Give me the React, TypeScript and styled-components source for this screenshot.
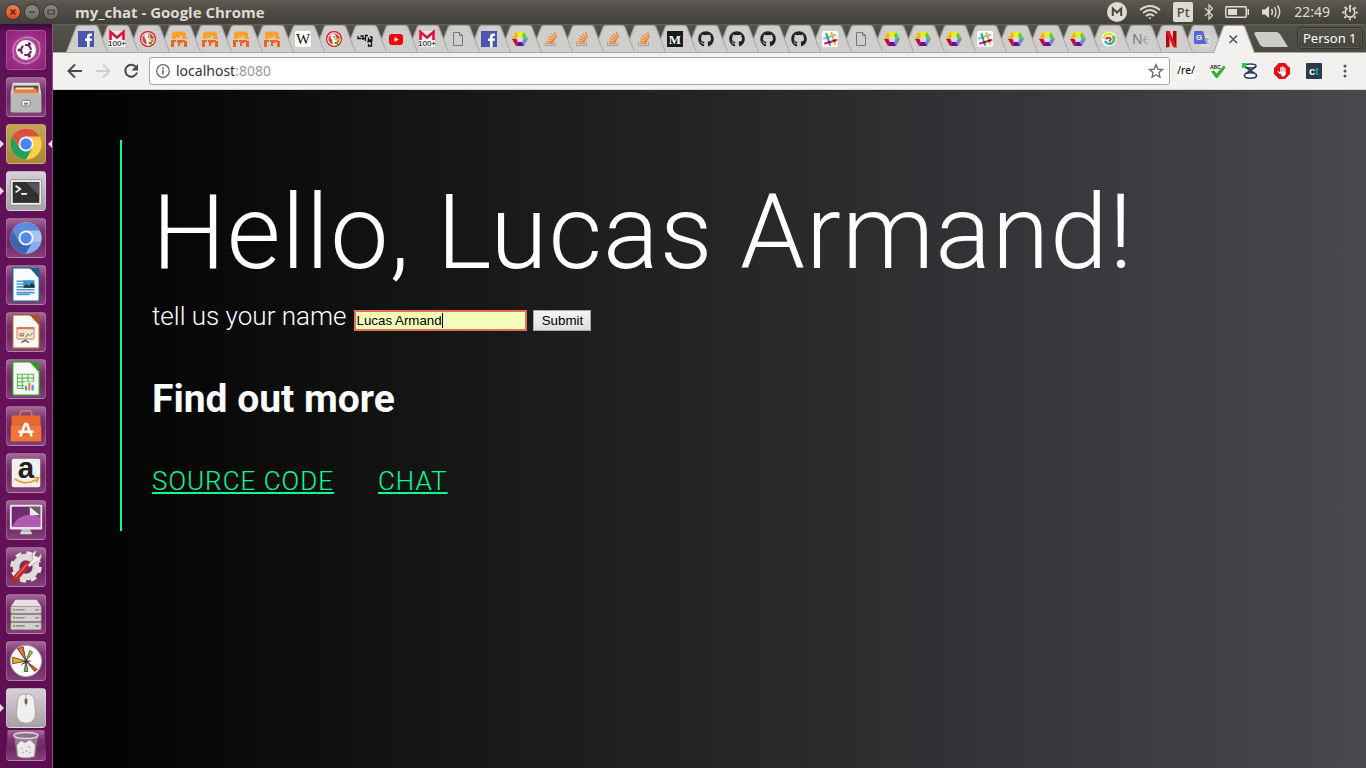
import React from "react";
import styled, { createGlobalStyle } from "styled-components";
import { FaGithub } from "react-icons/fa";

const GlobalStyle = createGlobalStyle`
  * { box-sizing: border-box; }
  html, body, #root { height: 100%; }
  body { margin: 0; overflow: hidden; font-family: "Noto Sans", "Open Sans", sans-serif; }
  svg { display: block; flex: none; overflow: visible; }
`;

/* ---------- desktop frame ---------- */

const Desktop = styled.div`
  display: flex;
  flex-direction: column;
  min-height: 100vh;
  background: #000;
`;

const TitleBar = styled.header`
  display: flex;
  align-items: center;
  justify-content: space-between;
  height: 24px;
  padding: 0 8px 0 5px;
  background: linear-gradient(#5f5d50 0, #59574e 2px, #403f3a 100%);
  color: #dfdbd2;
`;

const TitleGroup = styled.div`
  display: flex;
  align-items: center;
  gap: 3px;
`;

const WindowButton = styled.button<{ $close?: boolean }>`
  display: grid;
  place-items: center;
  width: 16px;
  height: 16px;
  padding: 0;
  border: 1px solid #3a3934;
  border-radius: 50%;
  background: ${(p) => (p.$close ? "linear-gradient(#f37e56, #df4b1c)" : "linear-gradient(#8a887f, #6d6b63)")};
`;

const WindowTitle = styled.h1`
  margin: 0 0 0 13px;
  font-family: "Open Sans", sans-serif;
  font-size: 15px;
  line-height: 20px;
  font-weight: 700;
  white-space: nowrap;
`;

const Indicators = styled.div`
  display: flex;
  align-items: center;
  gap: 12px;
`;

const LayoutBadge = styled.span`
  width: 20px;
  height: 20px;
  border-radius: 2px;
  background: #dfdbd2;
  color: #47463f;
  font-size: 13px;
  font-weight: 500;
  line-height: 20px;
  text-align: center;
`;

const Clock = styled.time`
  font-size: 14px;
  line-height: 20px;
`;

const Workspace = styled.div`
  display: flex;
  flex: 1;
  min-height: 0;
`;

/* ---------- launcher ---------- */

const Launcher = styled.nav`
  display: flex;
  flex-direction: column;
  align-items: center;
  gap: 7px;
  flex: none;
  width: 53px;
  padding-top: 6px;
  border-right: 1px solid #8b4a80;
  background: linear-gradient(#3b0b36 0, #5f1157 8px, #651158 60%, #5c0d50 100%);
`;

const Tile = styled.button<{ $bg: string; $folded?: boolean }>`
  display: grid;
  place-items: center;
  flex: none;
  width: 40px;
  height: ${(p) => (p.$folded ? 31 : 40)}px;
  margin-top: ${(p) => (p.$folded ? -5 : 0)}px;
  padding: 0;
  border: 1px solid rgba(255, 255, 255, 0.2);
  border-radius: 4px;
  background: ${(p) => p.$bg};
  clip-path: ${(p) => (p.$folded ? "polygon(4% 0, 96% 0, 100% 100%, 0 100%)" : "none")};
`;

const TileSlot = styled.div<{ $running?: boolean; $active?: boolean }>`
  position: relative;
  flex: none;
  &::before,
  &::after {
    position: absolute;
    top: 16px;
    border: 4px solid transparent;
    content: "";
  }
  &::before {
    display: ${(p) => (p.$running ? "block" : "none")};
    left: -6px;
    border-left-color: #e4dbe2;
    border-right-width: 0;
  }
  &::after {
    display: ${(p) => (p.$active ? "block" : "none")};
    right: -6px;
    border-right-color: #e4dbe2;
    border-left-width: 0;
  }
`;

/* ---------- browser ---------- */

const Browser = styled.section`
  display: flex;
  flex-direction: column;
  flex: 1;
  min-width: 0;
`;

const TabStrip = styled.div`
  display: flex;
  align-items: flex-end;
  height: 29px;
  padding-left: 13px;
  background: linear-gradient(#68675a 0, #525146 2px, #4c4b42 100%);
  border-bottom: 1px solid #a9a7a5;
`;

const Tab = styled.button<{ $active?: boolean; $order: number }>`
  position: relative;
  z-index: ${(p) => (p.$active ? 50 : p.$order)};
  display: grid;
  place-items: center;
  flex: none;
  width: 42px;
  height: ${(p) => (p.$active ? 28 : 27)}px;
  margin-right: -11px;
  margin-bottom: ${(p) => (p.$active ? -1 : 0)}px;
  padding: 0 2px 0 0;
  border: 0;
  background: none;
  &::before,
  &::after {
    position: absolute;
    inset: 0;
    z-index: -1;
    background: #aaa8a6;
    clip-path: polygon(0 100%, 10px 1px, 12px 0, 30px 0, 32px 1px, 100% 100%);
    content: "";
  }
  &::after {
    background: ${(p) => (p.$active ? "#f2f1f0" : "#d0cecd")};
    clip-path: polygon(1px 100%, 11px 2px, 13px 1px, 29px 1px, 31px 2px, 41px 100%);
  }
`;

const NewTab = styled.button`
  flex: none;
  width: 34px;
  height: 15px;
  margin: 0 9px 5px 10px;
  padding: 0;
  border: 0;
  background: #cdcbc9;
  clip-path: polygon(0 1px, 2px 0, 23px 0, 26px 2px, 100% 100%, 9px 100%, 6px 13px);
`;

const Profile = styled.button`
  flex: none;
  height: 22px;
  margin: 0 7px 3px auto;
  padding: 0 5px;
  border: 1px solid #35342e;
  border-radius: 4px;
  background: linear-gradient(#53524a, #45443d);
  box-shadow: inset 0 0 0 1px #5a594f;
  color: #fff;
  font: 13px/18px "Noto Sans", sans-serif;
  white-space: nowrap;
`;

const Toolbar = styled.div`
  display: flex;
  align-items: center;
  height: 37px;
  padding: 0 14px 0 13px;
  border-bottom: 1px solid #d6d4d2;
  background: #f2f1f0;
`;

const IconButton = styled.button`
  display: grid;
  place-items: center;
  flex: none;
  width: 18px;
  height: 18px;
  margin-right: 10px;
  padding: 0;
  border: 0;
  background: none;
`;

const AddressBar = styled.form`
  display: flex;
  align-items: center;
  flex: 1;
  min-width: 0;
  height: 28px;
  margin: 0 8px 0 -1px;
  padding: 0 5px;
  border: 1px solid #aaa8a6;
  border-radius: 3px;
  background: #fff;
`;

const UrlInput = styled.input`
  field-sizing: content;
  margin-left: 5px;
  padding: 0;
  border: 0;
  outline: 0;
  background: none;
  color: #333;
  font: 14px/20px "Noto Sans", sans-serif;
`;

const Port = styled.span`
  flex: 1;
  color: #999;
  font-size: 14px;
  line-height: 20px;
`;

const PlainButton = styled.button`
  flex: none;
  padding: 0;
  border: 0;
  background: none;
`;

const Extensions = styled.div`
  display: flex;
  align-items: center;
  gap: 16px;
`;

/* ---------- page ---------- */

const Page = styled.main`
  flex: 1;
  padding: 50px 67px;
  background: linear-gradient(to right, #000, #48494d);
  color: #fff;
  font: 300 26px/30px Roboto, sans-serif;
`;

const Panel = styled.div`
  padding: 32px 30px 35px;
  border-left: 2px solid #00ff95;
`;

const Greeting = styled.h2`
  margin: 0;
  font-size: 104px;
  font-weight: 300;
  line-height: 122px;
  letter-spacing: 1px;
  white-space: nowrap;
`;

const NameForm = styled.form`
  display: flex;
  align-items: center;
  margin-top: 7px;
  height: 30px;
`;

const Label = styled.label`
  margin: -1px 9px 0 0;
  white-space: nowrap;
`;

const NameField = styled.span`
  position: relative;
  display: flex;
  margin: 8px 7px 0 0;
`;

const Caret = styled.span`
  position: absolute;
  left: 87px;
  top: 2px;
  width: 1px;
  height: 15px;
  background: #000;
`;

const NameInput = styled.input`
  width: 171px;
  height: 19px;
  padding: 0;
  border: 1px solid #d9d6b0;
  border-radius: 0;
  outline: 2px solid #dd7259;
  outline-offset: -1px;
  background: #f3ffb8;
  color: #000;
  font-family: "Liberation Sans", Arial, sans-serif;
`;

const Submit = styled.button`
  width: 58px;
  height: 21px;
  margin-top: 8px;
  padding: 0;
  border: 1px solid #a8a8a8;
  background: linear-gradient(#f6f6f6, #dddddd);
  color: #000;
  font-family: "Liberation Sans", Arial, sans-serif;
`;

const MoreHeading = styled.h3`
  margin: 45px 0 0;
  font-size: 39px;
  font-weight: 700;
  line-height: 46px;
`;

const Links = styled.nav`
  display: flex;
  gap: 44px;
  margin-top: 44px;
`;

const PageLink = styled.a`
  color: #00ff95;
  letter-spacing: 1px;
  text-transform: uppercase;
  text-decoration-thickness: 2px;
  text-underline-offset: 2px;
`;

/* ---------- favicons ---------- */

type Fav =
  | "facebook" | "gmail" | "duck" | "fort" | "wiki" | "scribble" | "youtube" | "doc" | "hex"
  | "stack" | "medium" | "github" | "slack" | "swirl" | "ne" | "netflix" | "translate" | "close";

const serif = '"Liberation Serif", serif';
const sans = '"Liberation Sans", sans-serif';

const favicons: Record<Fav, React.ReactNode> = {
  facebook: (
    <>
      <rect width="16" height="16" fill="#4d55b3" />
      <path d="M9 16V10H7V7.500H9V5.500Q9 2.500 12 2.500H14V5H12.500Q11.600 5 11.600 6V7.500H14L13.600 10H11.600V16Z" fill="#fff" />
    </>
  ),
  gmail: (
    <>
      <rect width="16" height="16" fill="#f4f2f2" />
      <path d="M1.500 9V1L8 6.500L14.500 1V9" fill="none" stroke="#e0103c" strokeWidth="2.600" />
      <path d="M3 0H13L8 4Z" fill="#fbe3e6" />
      <text x="8" y="15" textAnchor="middle" fontFamily={sans} fontSize="8" fill="#000">100+</text>
    </>
  ),
  duck: (
    <>
      <circle cx="8" cy="8" r="8" fill="#d9121b" />
      <circle cx="8" cy="8" r="6.200" fill="#e8342c" stroke="#fff" strokeWidth="1.200" />
      <path d="M4.500 4Q7 2 10 4.500L10.500 8L12 13Q9 15 7 14L6 9Q4 7 4.500 4Z" fill="#fff" />
      <path d="M8 7.500H13L12.500 9.500H8.500Z" fill="#fcc419" />
      <path d="M8.500 11L12 10.500V13.500L8.500 13Z" fill="#2cae3c" />
      <circle cx="8.500" cy="5.800" r=".9" fill="#2d4f8e" />
    </>
  ),
  fort: (
    <>
      <path d="M1 8V2L3 .5H13L15 2V6H16V8H11V5H9V7H6V6H5V8Z" fill="#ffa12b" />
      <path d="M0 9H5V11H3V16H0ZM6 9H14V11H11V12H9V15H7V11H6ZM13 10H16V16H13Z" fill="#f0641c" />
    </>
  ),
  wiki: (
    <>
      <rect width="16" height="16" rx="2" fill="#fff" />
      <text x="8" y="13" textAnchor="middle" fontFamily={serif} fontSize="15" fill="#111">W</text>
    </>
  ),
  scribble: (
    <path d="M1 5V7.500H4.500M3.500 5H6V9M5 7.500H8.500V4.500H11M8.500 6.500V10M11.500 6.500V9H15V6H13M11 11.500V10.500H14.500V15H11.500V13" fill="none" stroke="#111" strokeWidth="1.300" />
  ),
  youtube: (
    <>
      <rect x="1" y="3" width="14" height="11" rx="3" fill="#f60010" />
      <path d="M6.500 6V11L10.500 8.500Z" fill="#fff" />
    </>
  ),
  doc: <path d="M3.500 1.500H9.500L12.500 4.500V14.500H3.500ZM9.500 1.500V4.500H12.500" fill="none" stroke="#777" />,
  hex: (
    <>
      <path d="M4 1H12L10 5H6Z" fill="#eef000" />
      <path d="M12 1L16 8H11L10 5Z" fill="#62cc3a" />
      <path d="M16 8L12 15L10 11L11 8Z" fill="#7588d8" />
      <path d="M12 15H4L6 11H10Z" fill="#6b0f95" />
      <path d="M4 15L0 8H5L6 11Z" fill="#bd0c3c" />
      <path d="M0 8L4 1L6 5L5 8Z" fill="#f7b400" />
      <path d="M6 5H10L11.500 8L10 11H6L4.500 8Z" fill="#d8d8de" />
    </>
  ),
  stack: (
    <>
      <path d="M2.500 11V14.500H12.500V11" fill="none" stroke="#9aa2a8" />
      <path d="M4 12.500H11M4 10.300L11 11.200M4.500 7.500L11.200 10M6 4.800L11.800 9M8.500 2.500L12.500 7.800M11.500 1L13.500 7" stroke="#f48024" fill="none" strokeWidth="1.200" />
    </>
  ),
  medium: (
    <>
      <rect width="16" height="16" fill="#1a1a1a" />
      <text x="8" y="12.500" textAnchor="middle" fontFamily={serif} fontWeight="700" fontSize="13" fill="#fff">M</text>
    </>
  ),
  github: <FaGithub size={16} color="#222" />,
  slack: (
    <>
      <rect width="16" height="16" rx="2" fill="#fff" />
      <g strokeWidth="2" strokeLinecap="round" fill="none">
        <path d="M2 7.500L13 4" stroke="#6ecadc" />
        <path d="M9.500 2L13 13" stroke="#ebb424" />
        <path d="M4.500 3L8 14" stroke="#20a888" />
        <path d="M3 12.500L14.500 9" stroke="#e01563" />
      </g>
      <path d="M6 10.500L8 10L8.500 12L6.500 12.500ZM11 9L13 8.500L13.500 10.500L11.500 11Z" fill="#5b1030" />
    </>
  ),
  swirl: (
    <>
      <circle cx="8" cy="8" r="7.500" fill="#fff" />
      <path d="M3 8A5 5 0 0 1 12 5" fill="none" stroke="#d9ec00" strokeWidth="2.600" />
      <path d="M12 5A5 5 0 0 1 8 13" fill="none" stroke="#35ce3d" strokeWidth="2.600" />
      <path d="M10 12.500A5 5 0 0 1 4 10" fill="none" stroke="#15aec8" strokeWidth="2" />
      <path d="M5 8.500Q6 6 9 7Q11 9 8 10" fill="none" stroke="#e4257b" strokeWidth="2" />
    </>
  ),
  ne: <text x="0" y="13" fontFamily="Noto Sans" fontSize="14" fill="url(#fade)">Ne</text>,
  netflix: (
    <>
      <path d="M3 0H6.500V16L3 16.500ZM10 0H13.500V16.500L10 16Z" fill="#b1060f" />
      <path d="M3 0H6.500L13.500 16.500L10 16Z" fill="#f0101c" />
    </>
  ),
  translate: (
    <>
      <rect x="7" y="4" width="9" height="12" rx="1" fill="#dcdcdc" />
      <path d="M1 0H9L13 13H2Q0 13 0 12V1Q0 0 1 0Z" fill="#5468d8" />
      <path d="M10 8H15M12.500 7V8M14 8Q13 12 10.500 13M11 9Q12 11 15 13" stroke="#8ba3b8" fill="none" />
      <text x="2" y="9" fontFamily={sans} fontSize="8" fontWeight="700" fill="#fff">G</text>
    </>
  ),
  close: <path d="M4.500 4.500L12 12M12 4.500L4.500 12" stroke="#555" strokeWidth="1.500" />,
};

const tabs: Fav[] = [
  "facebook", "gmail", "duck", "fort", "fort", "fort", "fort", "wiki", "duck", "scribble",
  "youtube", "gmail", "doc", "facebook", "hex", "stack", "stack", "stack", "stack", "medium",
  "github", "github", "github", "github", "slack", "doc", "hex", "hex", "hex", "slack",
  "hex", "hex", "hex", "swirl", "ne", "netflix", "translate", "close",
];

/* ---------- launcher icons ---------- */

const Sheet = ({ color, children }: { color: string; children: React.ReactNode }) => (
  <>
    <path d="M6 2H25L34 12V37H6Z" fill="#fafafa" stroke={color} strokeWidth="1.500" />
    <path d="M24 2H34V12Z" fill={color} />
    {children}
  </>
);

const glass = "linear-gradient(#a26797 0, #7b3470 30%, #702863 60%, #843f79 100%)";
const silver = "linear-gradient(#d8d0d6, #a79fa6)";

interface LauncherApp {
  name: string;
  bg: string;
  running?: boolean;
  active?: boolean;
  art: React.ReactNode;
}

const apps: LauncherApp[] = [
  {
    name: "Dash",
    bg: "radial-gradient(circle, #d084bb, #9b2d83 60%, #8e2177)",
    art: (
      <>
        <path d="M8 28Q2 12 18 7Q28 5 35 14M33 12Q39 28 23 34Q14 36 6 27" fill="none" stroke="#d79bc9" strokeWidth="1.500" opacity=".7" />
        <circle cx="20" cy="20" r="10.500" fill="#fff" />
        <circle cx="20" cy="20" r="5.200" fill="none" stroke="#6d1a5c" strokeWidth="2.200" strokeDasharray="8.900 2" strokeDashoffset="-1" />
        <g fill="#6d1a5c"><circle cx="12.800" cy="20" r="1.700" /><circle cx="23.500" cy="13.600" r="1.700" /><circle cx="23.500" cy="26.400" r="1.700" /></g>
      </>
    ),
  },
  {
    name: "Files",
    bg: glass,
    art: (
      <>
        <path d="M6 5H34L36 16V35Q36 36 35 36H5Q4 36 4 35V16Z" fill="#dcdbda" />
        <path d="M7 8H33V16H7Z" fill="#5c4a3e" />
        <path d="M8 11H31L33 16H7Z" fill="#ef7e3c" />
        <path d="M9 10H28V12H9Z" fill="#f8e5cc" />
        <path d="M4 16H36V35Q36 36 35 36H5Q4 36 4 35Z" fill="#b9b8b6" />
        <rect x="15.500" y="23.500" width="9" height="6" rx="1" fill="#eee" stroke="#777" />
        <rect x="18" y="26" width="4" height="2" fill="#777" />
      </>
    ),
  },
  {
    name: "Google Chrome",
    bg: "linear-gradient(#c3a555, #aa8739)",
    running: true,
    active: true,
    art: (
      <>
        <circle cx="20" cy="20" r="16.500" fill="#ffcf48" />
        <path d="M20 20L5.700 11.800A16.500 16.500 0 0 1 34.300 12H20Z" fill="#dc5044" />
        <path d="M5.700 11.800A16.500 16.500 0 0 0 20 36.500L27 24L13 24Z" fill="#23a05c" />
        <path d="M5.700 11.800L13 24H20V12H34.300" fill="#dc5044" />
        <circle cx="20" cy="20" r="7.800" fill="#fff" />
        <circle cx="20" cy="20" r="6" fill="#4387f4" />
      </>
    ),
  },
  {
    name: "Terminal",
    bg: silver,
    running: true,
    art: (
      <>
        <rect x="3.500" y="8" width="33" height="27" rx="1" fill="#ececec" stroke="#8e8c8c" />
        <rect x="6" y="10.500" width="28" height="22" fill="#30302f" />
        <path d="M20 11H34V25Z" fill="#555" />
        <path d="M9 14.500L14 18L9 21.500M15 23H21" fill="none" stroke="#fff" strokeWidth="1.700" />
      </>
    ),
  },
  {
    name: "Chromium",
    bg: glass,
    art: (
      <>
        <circle cx="20" cy="20" r="16.500" fill="#a5c5f6" />
        <path d="M5.700 11.800A16.500 16.500 0 0 1 34.300 12H20L13 24Z" fill="#5b8bdf" />
        <path d="M5.700 11.800A16.500 16.500 0 0 0 20 36.500L27 24H13Z" fill="#3b64b4" />
        <path d="M20 36.500L27 24H35.500A16.500 16.500 0 0 1 20 36.500Z" fill="#85adee" />
        <circle cx="20" cy="20" r="7.800" fill="#fff" />
        <circle cx="20" cy="20" r="6" fill="#4f8bed" />
      </>
    ),
  },
  {
    name: "Writer",
    bg: glass,
    art: (
      <Sheet color="#1b5f8e">
        <path d="M10 16H17M10 19H17M10 22H17M10 25H29M10 28H29M10 30H24" stroke="#4c9ccb" strokeWidth="1.700" />
        <rect x="17" y="15" width="12" height="8" fill="#3f91d0" />
        <path d="M17 23L20 19L23 21L26 18L29 20V23Z" fill="#1b3d35" />
      </Sheet>
    ),
  },
  {
    name: "Impress",
    bg: glass,
    art: (
      <Sheet color="#a85524">
        <rect x="10.500" y="15.500" width="18" height="12" rx="1" fill="#f7dfd1" stroke="#cf8056" />
        <path d="M10 16H29" stroke="#d77b4e" strokeWidth="2" />
        <path d="M13 22H18M13 24H18" stroke="#9b5131" />
        <path d="M20 26L22 22L24 24L27 21" stroke="#3b9f45" fill="none" />
        <path d="M15 31L19 29L23 31" stroke="#444" fill="none" strokeWidth="1.300" />
      </Sheet>
    ),
  },
  {
    name: "Calc",
    bg: glass,
    art: (
      <Sheet color="#2c9c20">
        <path d="M11 15H28V30H11Z" fill="#e4f7df" stroke="#57ad4c" />
        <path d="M11 19H28M11 23H28M11 27H28M16 15V30M22 15V30" stroke="#57ad4c" />
        <rect x="18" y="23" width="11" height="9" fill="#f6f6f6" />
        <path d="M20 32V27M27 32V26" strokeWidth="2.300" stroke="#4d9cce" />
        <path d="M23.500 32V24" strokeWidth="2.300" stroke="#e78138" />
      </Sheet>
    ),
  },
  {
    name: "Software",
    bg: glass,
    art: (
      <>
        <path d="M14 12V7Q14 4 17 4H23Q26 4 26 7V12" fill="none" stroke="#df7950" strokeWidth="1.600" />
        <path d="M5 9H35L36 36H4Z" fill="#e8672f" />
        <path d="M4 20H36V36H4Z" fill="#f27538" />
        <path d="M14 31L19 18H21L26 31M12 26H28" fill="none" stroke="#fff" strokeWidth="2.600" />
      </>
    ),
  },
  {
    name: "Amazon",
    bg: glass,
    art: (
      <>
        <rect x="5" y="5" width="30" height="30" rx="2" fill="#f1f0f0" />
        <text x="20" y="25" textAnchor="middle" fontFamily={sans} fontSize="31" fontWeight="700" fill="#222">a</text>
        <path d="M8 26Q20 34 31 27M28 25L33 25L31 30" fill="none" stroke="#f79b1c" strokeWidth="1.800" />
      </>
    ),
  },
  {
    name: "Desktop",
    bg: glass,
    art: (
      <>
        <path d="M16 29H24L26 34H14Z" fill="#bbb" />
        <rect x="3" y="4" width="34" height="26" rx="1" fill="#e7e5e5" />
        <rect x="5" y="6" width="30" height="21" fill="#702970" />
        <path d="M5 27Q15 9 35 17V27Z" fill="#b15bb2" />
        <path d="M24 6L35 15H24Z" fill="#eee" />
        <path d="M24 6H35V15Z" fill="#666" />
        <path d="M14 34H26" stroke="#ddd" strokeWidth="2" />
      </>
    ),
  },
  {
    name: "Settings",
    bg: glass,
    art: (
      <>
        <circle cx="20" cy="20" r="14.500" fill="none" stroke="#e9e8e7" strokeWidth="4" strokeDasharray="6 5.390" />
        <circle cx="20" cy="20" r="10.500" fill="none" stroke="#dddcdb" strokeWidth="7" />
        <path d="M8 33L22 17" stroke="#bd2924" strokeWidth="6" strokeLinecap="round" />
        <path d="M9 31L21 17" stroke="#e57863" strokeWidth="1.200" />
        <path d="M22 18L27 12Q25 4 31 3L29 8L33 10L36 6Q37 14 30 15L24 20Z" fill="#eee" stroke="#999" strokeWidth=".7" />
      </>
    ),
  },
  {
    name: "Servers",
    bg: glass,
    art: (
      <>
        <path d="M9 5H31L36 12H4Z" fill="#e4e3e1" />
        {[12, 20.5, 29].map((y) => (
          <g key={y}>
            <rect x="4" y={y} width="32" height="7.500" rx="1" fill="#d3d2d0" stroke="#8d868b" strokeWidth=".6" />
            <circle cx="7.500" cy={y + 3.5} r="1.300" fill="#8bb22f" />
            <path d={`M10 ${y + 3.5}H19M30 ${y + 3.5}H34`} stroke="#777" strokeDasharray="1.500 .6" strokeWidth="1.600" />
          </g>
        ))}
      </>
    ),
  },
  {
    name: "Pinwheel",
    bg: glass,
    art: (
      <>
        <circle cx="20" cy="20" r="16.500" fill="#fff" stroke="#aaa" />
        <g stroke="#3d2b1e" strokeWidth=".8">
          <path d="M20 20L11 7L17 5Z" fill="#f06d31" />
          <path d="M20 20L6 16V23Z" fill="#f0aa20" />
          <path d="M20 20L24 9L27 11Z" fill="#a8d64b" />
          <path d="M20 20L18 31H22Z" fill="#69c877" />
          <path d="M20 20L29 31L32 29Z" fill="#e95420" />
          <path d="M15 24L20 20L25 20" fill="#235" />
        </g>
      </>
    ),
  },
  {
    name: "Mouse",
    bg: silver,
    running: true,
    art: (
      <>
        <path d="M11 13Q11 5 20 5Q29 5 29 13L30 25Q30 36 20 36Q10 36 10 25Z" fill="#f0efee" stroke="#999" strokeWidth=".8" />
        <path d="M20 5V18" stroke="#999" />
        <rect x="18.500" y="10" width="3" height="6" rx="1.500" fill="#666" />
      </>
    ),
  },
];

const TrashArt = (
  <svg width="36" height="29" viewBox="0 0 36 29" aria-hidden="true">
    <path d="M6 4L9 26Q18 29 27 26L30 4Z" fill="#a99ba8" opacity=".7" />
    <path d="M9 14L13 10L17 12L22 9L27 14L26 25Q18 28 10 25Z" fill="#ecebea" />
    <path d="M13 17L15 18M20 15L22 17M14 22L16 21M21 22L23 21M18 19L19 21" fill="none" stroke="#b5b0b4" strokeWidth="1.300" />
    <ellipse cx="18" cy="4.500" rx="12" ry="3" fill="#8d7189" stroke="#ddd6dc" strokeWidth="1.500" />
  </svg>
);

/* ---------- app ---------- */

export default function App() {
  return (
    <Desktop>
      <GlobalStyle />
      <TitleBar>
        <TitleGroup>
          <WindowButton $close aria-label="Close">
            <svg width="8" height="8"><path d="M1.500 1.500L6.500 6.500M6.500 1.500L1.500 6.500" stroke="#4a2415" strokeWidth="1.300" /></svg>
          </WindowButton>
          <WindowButton aria-label="Minimize">
            <svg width="8" height="8"><path d="M1 4H7" stroke="#3b3a35" strokeWidth="1.300" /></svg>
          </WindowButton>
          <WindowButton aria-label="Maximize">
            <svg width="8" height="8"><path d="M1 2H7V6H1Z" fill="none" stroke="#3b3a35" strokeWidth="1.200" /></svg>
          </WindowButton>
          <WindowTitle>my_chat - Google Chrome</WindowTitle>
        </TitleGroup>
        <Indicators>
          <svg width="20" height="20" aria-label="Mega">
            <circle cx="10" cy="10" r="10" fill="#dfdbd2" />
            <path d="M5.800 14V6.500L10 10.500L14.200 6.500V14" fill="none" stroke="#47463f" strokeWidth="2" />
          </svg>
          <svg width="22" height="18" viewBox="0 0 22 18" aria-label="Wi-Fi" fill="none" stroke="#dfdbd2" strokeWidth="1.700">
            <path d="M1 7Q11 -1 21 7M4 10Q11 4 18 10M7 13Q11 9.500 15 13" />
            <path d="M9.500 14.500H12.500L11 16.500Z" fill="#dfdbd2" stroke="none" />
          </svg>
          <LayoutBadge>Pt</LayoutBadge>
          <svg width="8" height="16" aria-label="Bluetooth"><path d="M0 4L7.500 11.500L4 15V1L7.500 4.500L0 12" fill="none" stroke="#dfdbd2" strokeWidth="1.200" /></svg>
          <svg width="25" height="14" aria-label="Battery">
            <rect x=".75" y="1.750" width="20.500" height="10.500" rx="1" fill="none" stroke="#dfdbd2" strokeWidth="1.500" />
            <path d="M3 4H12V10H3ZM22.500 4H24V10H22.500Z" fill="#dfdbd2" />
          </svg>
          <svg width="20" height="16" aria-label="Volume" fill="none" stroke="#dfdbd2" strokeWidth="1.400">
            <path d="M0 5.500H3L7 2V14L3 10.500H0Z" fill="#dfdbd2" stroke="none" />
            <path d="M9.500 5Q11.500 8 9.500 11M12.500 3Q15.500 8 12.500 13M15.500 1.500Q20 8 15.500 14.500" />
          </svg>
          <Clock>22:49</Clock>
          <svg width="16" height="18" viewBox="0 0 16 18" aria-label="Session" fill="none" stroke="#dfdbd2">
            <path d="M5.500 5.200A4.800 4.800 0 1 0 10.500 5.200" strokeWidth="1.600" />
            <circle cx="8" cy="9.500" r="6.700" strokeWidth="2" strokeDasharray="2 3.262" strokeDashoffset="1" />
            <path d="M8 3V9" strokeWidth="1.800" />
          </svg>
        </Indicators>
      </TitleBar>

      <Workspace>
        <Launcher aria-label="Launcher">
          {apps.map((a) => (
            <TileSlot key={a.name} $running={a.running} $active={a.active}>
              <Tile $bg={a.bg} aria-label={a.name}>
                <svg width="38" height="38" viewBox="0 0 40 40" aria-hidden="true">{a.art}</svg>
              </Tile>
            </TileSlot>
          ))}
          <Tile $bg={glass} $folded aria-label="Trash">{TrashArt}</Tile>
        </Launcher>

        <Browser>
          <TabStrip>
            <svg width="0" height="0" aria-hidden="true">
              <linearGradient id="fade"><stop offset="0.400" stopColor="#777" /><stop offset="1" stopColor="#d0cecd" /></linearGradient>
            </svg>
            {tabs.map((t, i) => (
              <Tab key={i} $order={tabs.length - i} $active={t === "close"} aria-label={`Tab ${i + 1}`}>
                <svg width="16" height="16" aria-hidden="true">{favicons[t]}</svg>
              </Tab>
            ))}
            <NewTab aria-label="New tab" />
            <Profile>Person 1</Profile>
          </TabStrip>

          <Toolbar>
            <IconButton aria-label="Back">
              <svg width="16" height="16"><path d="M15 8H2M8 1.500L1.500 8L8 14.500" fill="none" stroke="#4a4a4a" strokeWidth="2" /></svg>
            </IconButton>
            <IconButton aria-label="Forward">
              <svg width="16" height="16"><path d="M1 8H14M8 1.500L14.500 8L8 14.500" fill="none" stroke="#cfcdcc" strokeWidth="2" /></svg>
            </IconButton>
            <IconButton aria-label="Reload">
              <svg width="16" height="16">
                <path d="M13 4A6 6 0 1 0 14 9.500" fill="none" stroke="#4a4a4a" strokeWidth="2" />
                <path d="M15 1V7.500H8.500Z" fill="#4a4a4a" />
              </svg>
            </IconButton>
            <AddressBar>
              <svg width="16" height="16" aria-hidden="true">
                <circle cx="8" cy="8" r="6.300" fill="none" stroke="#666" strokeWidth="1.300" />
                <path d="M8 7V11.500M8 4.300V5.900" stroke="#666" strokeWidth="1.600" />
              </svg>
              <UrlInput aria-label="Address" defaultValue="localhost" />
              <Port>:8080</Port>
              <PlainButton type="button" aria-label="Bookmark">
                <svg width="16" height="16"><path d="M8 1.800L9.800 6.100L14.500 6.500L11 9.600L12 14.200L8 11.800L4 14.200L5 9.600L1.500 6.500L6.200 6.100Z" fill="none" stroke="#666" strokeWidth="1.300" /></svg>
              </PlainButton>
            </AddressBar>
            <Extensions>
              <PlainButton aria-label="Regex">
                <svg width="16" height="16"><rect width="16" height="16" fill="#fff" /><text x="8" y="11" textAnchor="middle" fontFamily="Noto Sans" fontWeight="500" fontSize="10" fill="#111">/re/</text></svg>
              </PlainButton>
              <PlainButton aria-label="Spell check">
                <svg width="16" height="16"><path d="M1 8.500L4 7.500L6.500 10.500L14 2.500L15.500 4.500L7.500 15H6Z" fill="#27b52b" /><text x="0" y="5.500" fontFamily={sans} fontWeight="700" fontSize="5" fill="#222">ABC</text></svg>
              </PlainButton>
              <PlainButton aria-label="Hourglass">
                <svg width="16" height="16" fill="none" stroke="#263c5d" strokeWidth="1.600">
                  <ellipse cx="8.500" cy="3" rx="5.500" ry="2" fill="#fff" />
                  <path d="M3.500 4L12.500 10.500M13.500 4L4 10.500" />
                  <ellipse cx="8.500" cy="12.500" rx="6" ry="2.700" fill="#fff" />
                  <path d="M0 0H5L3 5H0Z" fill="#1bdc2a" stroke="none" />
                </svg>
              </PlainButton>
              <PlainButton aria-label="Ad blocker">
                <svg width="16" height="16">
                  <path d="M5 0H11L16 5V11L11 16H5L0 11V5Z" fill="#e50914" />
                  <path d="M4 8.500L6 10.500M6.700 4.500V9M8.200 3.500V9M9.700 4V9M11.200 5.500V10" stroke="#fff" strokeWidth="1.100" strokeLinecap="round" />
                  <path d="M5.500 9L11.700 8.500Q12 13 9.500 13.500H8Z" fill="#fff" />
                </svg>
              </PlainButton>
              <PlainButton aria-label="CT">
                <svg width="16" height="16"><rect width="16" height="16" rx="1" fill="#2d3a45" /><text x="3" y="12" fontFamily={sans} fontWeight="700" fontSize="11" fill="#fff">c<tspan fill="#12a5bf">t</tspan></text></svg>
              </PlainButton>
              <PlainButton aria-label="Menu">
                <svg width="14" height="16" fill="#555"><circle cx="7" cy="3" r="1.500" /><circle cx="7" cy="8" r="1.500" /><circle cx="7" cy="13" r="1.500" /></svg>
              </PlainButton>
            </Extensions>
          </Toolbar>

          <Page>
            <Panel>
              <Greeting>Hello, Lucas Armand!</Greeting>
              <NameForm>
                <Label htmlFor="name">tell us your name</Label>
                <NameField>
                  <NameInput id="name" defaultValue="Lucas Armand" />
                  <Caret />
                </NameField>
                <Submit type="button">Submit</Submit>
              </NameForm>
              <MoreHeading>Find out more</MoreHeading>
              <Links>
                <PageLink href="#source">Source code</PageLink>
                <PageLink href="#chat">Chat</PageLink>
              </Links>
            </Panel>
          </Page>
        </Browser>
      </Workspace>
    </Desktop>
  );
}
